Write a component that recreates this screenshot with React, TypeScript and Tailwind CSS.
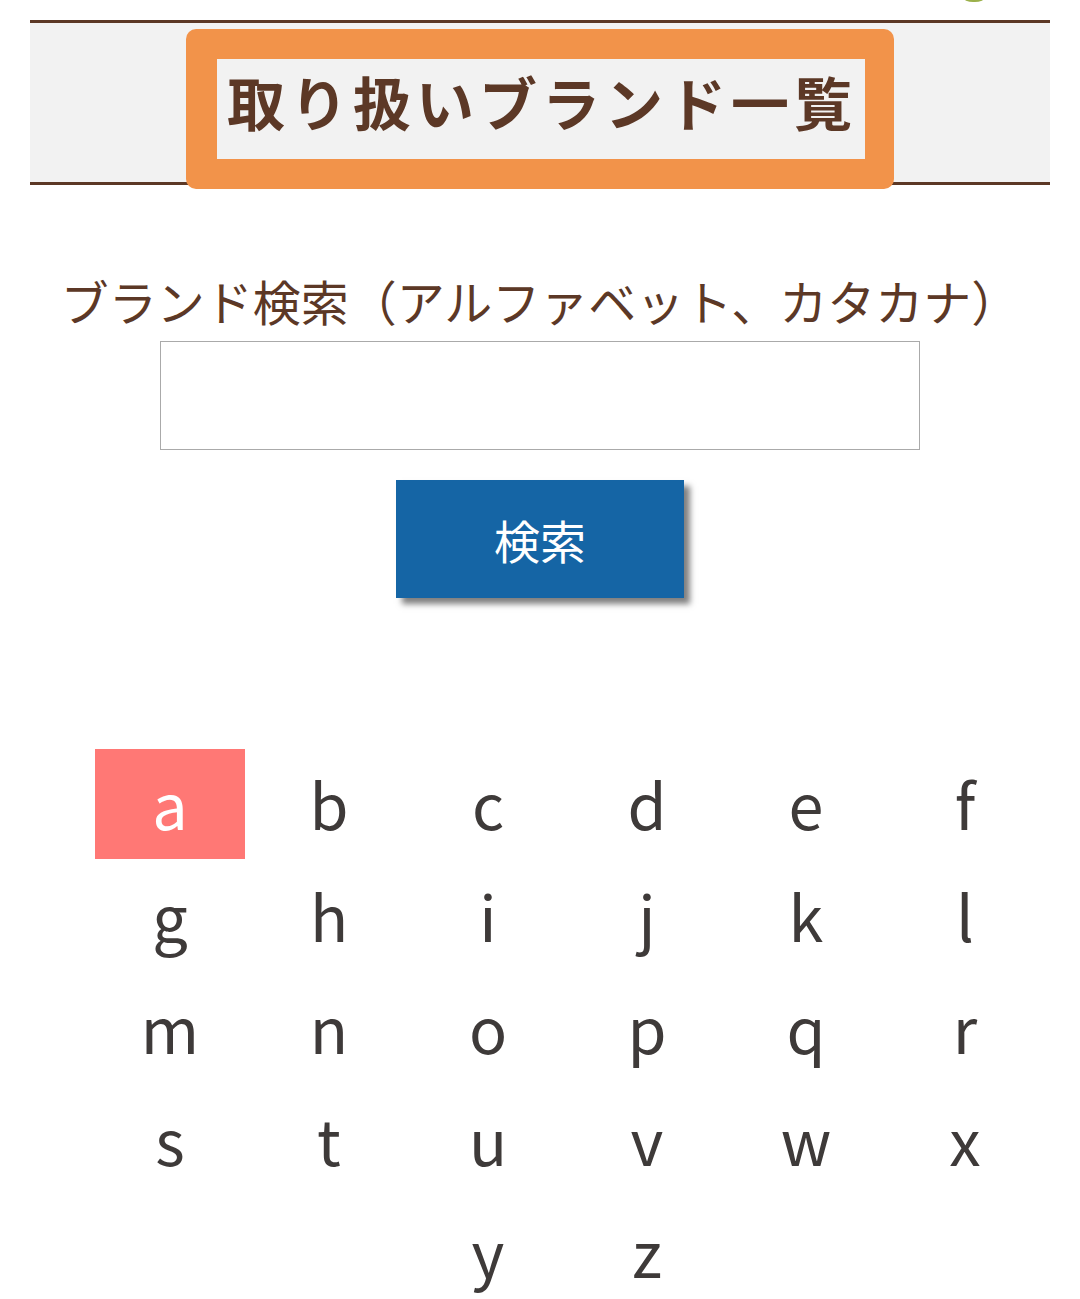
import { useState } from 'react';

const letters = 'abcdefghijklmnopqrstuvwxyz'.split('');

export default function App() {
  const [active, setActive] = useState('a');

  return (
    <div className="relative min-h-[1299px] overflow-hidden bg-white font-['Noto_Sans_CJK_JP','Noto_Sans',sans-serif]">
      {/* decoration peeking from above */}
      <div className="absolute left-[955px] top-[-34px] h-[36px] w-[38px] rounded-full bg-[#9bb04a]" />

      <div className="px-[30px] pt-[20px]">
        <div className="flex h-[165px] justify-center border-y-[3px] border-[#5c3826] bg-[#f2f2f2]">
          <div className="mt-[6px] h-[160px] w-[708px] shrink-0 rounded-[10px] bg-[#f2934a] py-[30px] pl-[31px] pr-[29px]">
            <div className="flex h-[100px] items-center bg-[#f2f2f2] pb-[16px] pl-[10px]">
              <h1 className="text-[58px] font-bold leading-none tracking-[5px] text-[#5c3826]">
                取り扱いブランド一覧
              </h1>
            </div>
          </div>
        </div>
      </div>

      <div className="flex flex-col items-center">
        <p className="mt-[85px] text-[48px] leading-[60px] text-[#5c3826]">
          ブランド検索（アルファベット、カタカナ）
        </p>
        <input
          type="text"
          className="mt-[11px] h-[109px] w-[760px] border border-[#aaaaaa] bg-white px-4 text-[40px] outline-none"
        />
        <button className="mt-[30px] h-[118px] w-[288px] bg-[#1565a5] text-[46px] text-white shadow-[6px_6px_6px_rgba(0,0,0,0.5)]">
          検索
        </button>
      </div>

      <div className="ml-[95px] mt-[151px] flex w-[945px] flex-wrap justify-center gap-x-[9px] gap-y-[2px]">
        {letters.map((l) => (
          <button
            key={l}
            onClick={() => setActive(l)}
            className={`flex h-[110px] w-[150px] items-center justify-center pb-[4px] text-[63px] leading-none ${
              l === active ? 'bg-[#ff7875] text-white' : 'text-[#3e3a39]'
            }`}
          >
            {l}
          </button>
        ))}
      </div>
    </div>
  );
}
